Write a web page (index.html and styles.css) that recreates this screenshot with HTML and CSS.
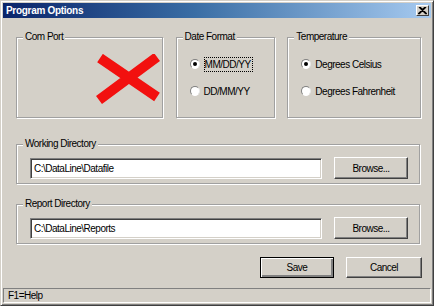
FILE: index.html
```html
<!DOCTYPE html>
<html lang="en">
<head>
    <meta charset="UTF-8">
    <title>Program Options</title>
    <link rel="stylesheet" href="styles.css">
</head>
<body>
    <div class="window">
        <div class="titlebar">
            <span class="title">Program Options</span>
            <span class="close">
                <svg width="9" height="8" viewBox="0 0 9 8">
                    <path d="M1 0 L8 7 M8 0 L1 7 M2 0 L9 7 M7 0 L0 7" stroke="#000" stroke-width="1.2"/>
                </svg>
            </span>
        </div>

        <div class="content">
            <div class="top-row">
                <fieldset class="group com-port">
                    <legend>Com Port</legend>
                    <!-- port list not available -->
                    <svg class="no-port" width="66" height="50" viewBox="0 0 66 50">
                        <path d="M5 4 L62 43 M62 3 L4 46" stroke="#f2100f" stroke-width="10"/>
                    </svg>
                </fieldset>

                <fieldset class="group date-format">
                    <legend>Date Format</legend>
                    <div class="radios">
                        <label class="radio-row"><span class="radio checked"></span><span class="focus">MM/DD/YY</span></label>
                        <label class="radio-row"><span class="radio"></span>DD/MM/YY</label>
                    </div>
                </fieldset>

                <fieldset class="group temperature">
                    <legend>Temperature</legend>
                    <div class="radios">
                        <label class="radio-row"><span class="radio checked"></span>Degrees Celsius</label>
                        <label class="radio-row"><span class="radio"></span>Degrees Fahrenheit</label>
                    </div>
                </fieldset>
            </div>

            <fieldset class="group dir working">
                <legend>Working Directory</legend>
                <div class="dir-row">
                    <div class="textbox">C:\DataLine\Datafile</div>
                    <button class="btn">Browse...</button>
                </div>
            </fieldset>

            <fieldset class="group dir report">
                <legend>Report Directory</legend>
                <div class="dir-row">
                    <div class="textbox">C:\DataLine\Reports</div>
                    <button class="btn">Browse...</button>
                </div>
            </fieldset>

            <div class="actions">
                <button class="btn default save">Save</button>
                <button class="btn cancel">Cancel</button>
            </div>
        </div>

        <div class="statusbar">F1=Help</div>
    </div>
</body>
</html>
```

FILE: styles.css
```css
body {
    margin: 0;
    background: #fff;
    font-family: 'Liberation Sans', Arial, sans-serif;
    font-size: 10px;
    letter-spacing: -0.5px;
    color: #000;
}
.window {
    width: 434px;
    height: 306px;
    box-sizing: border-box;
    background: #d4d0c8;
    border: 1px solid;
    border-color: #d4d0c8 #404040 #404040 #d4d0c8;
    box-shadow: inset 1px 1px 0 #fff, inset -1px -1px 0 #808080;
    padding: 2px;
    display: flex;
    flex-direction: column;
}

/* Title bar */
.titlebar {
    height: 15px;
    display: flex;
    align-items: center;
    justify-content: space-between;
    padding-left: 3px;
    background: linear-gradient(to right, #0a246a, #3a6ea5 45%, #a6caf0);
}
.title {
    color: #fff;
    font-weight: bold;
    letter-spacing: -0.3px;
}
.close {
    width: 13px;
    height: 11px;
    box-sizing: border-box;
    margin-right: 2px;
    background: #d4d0c8;
    border: 1px solid;
    border-color: #fff #404040 #404040 #fff;
    display: flex;
    align-items: center;
    justify-content: center;
}

/* Main area */
.content {
    padding: 13px 10px 0 13px;
    display: flex;
    flex-direction: column;
}
.top-row {
    display: flex;
}
.group {
    margin: 0;
    padding: 0;
    border: 1px solid #a0a0a0;
    box-shadow: inset 1px 1px 0 #fff, 1px 1px 0 #fff;
    min-width: 0;
}
.group legend {
    margin-left: 6px;
    padding: 0 2px;
    line-height: 12px;
    background: #d4d0c8;
}
.com-port {
    width: 147px;
    height: 87px;
    box-sizing: border-box;
}
.date-format {
    width: 100px;
    height: 87px;
    box-sizing: border-box;
    margin-left: 13px;
}
.temperature {
    width: 134px;
    height: 87px;
    box-sizing: border-box;
    margin-left: 12px;
}
.no-port {
    display: block;
    margin: 11px 0 0 78px;
}

/* Radios */
.radios {
    padding: 14px 0 0 13px;
    display: flex;
    flex-direction: column;
    gap: 13px;
}
.radio-row {
    display: flex;
    align-items: center;
    height: 14px;
}
.radio {
    width: 10px;
    height: 10px;
    box-sizing: border-box;
    border-radius: 50%;
    background: #fff;
    border: 1px solid;
    border-color: #808080 #e8e8e8 #fff #808080;
    margin-right: 4px;
    display: flex;
    align-items: center;
    justify-content: center;
}
.radio.checked::after {
    content: "";
    width: 4px;
    height: 4px;
    border-radius: 50%;
    background: #000;
}
.focus {
    border: 1px dotted #000;
    padding: 1px 1px 1px 0;
}

/* Directory boxes */
.dir {
    width: 404px;
    height: 46px;
    box-sizing: border-box;
}
.working {
    margin-top: 20px;
}
.report {
    margin-top: 14px;
}
.dir-row {
    display: flex;
    align-items: center;
    gap: 12px;
    padding: 7px 0 0 13px;
}
.textbox {
    width: 292px;
    height: 21px;
    box-sizing: border-box;
    background: #fff;
    border: 1px solid;
    border-color: #808080 #fff #fff #808080;
    box-shadow: inset 1px 1px 0 #404040, inset -1px -1px 0 #d4d0c8;
    padding: 4px 0 0 3px;
    white-space: nowrap;
}

/* Buttons */
.btn {
    font-family: inherit;
    font-size: 10px;
    letter-spacing: -0.5px;
    color: #000;
    width: 74px;
    height: 22px;
    padding: 0;
    background: #d4d0c8;
    border: 1px solid;
    border-color: #fff #404040 #404040 #fff;
    box-shadow: inset -1px -1px 0 #808080;
}
.btn.default {
    border: 1px solid #000;
    box-shadow: inset 1px 1px 0 #fff, inset -2px -2px 0 #808080;
}
.actions {
    display: flex;
    justify-content: flex-end;
    gap: 12px;
    margin: 13px -1px 0 0;
}
.save {
    height: 21px;
}
.cancel {
    width: 76px;
    height: 21px;
}

/* Status bar */
.statusbar {
    margin-top: auto;
    height: 15px;
    box-sizing: border-box;
    border: 1px solid;
    border-color: #808080 #fff #fff #808080;
    padding: 1px 0 0 4px;
}
```
